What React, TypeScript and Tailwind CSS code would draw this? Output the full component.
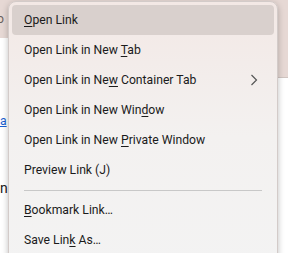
type Item = { pre: string; key: string; post: string; sub?: boolean; active?: boolean };

const items: Item[] = [
  { pre: "", key: "O", post: "pen Link", active: true },
  { pre: "Open Link in New ", key: "T", post: "ab" },
  { pre: "Open Link in Ne", key: "w", post: " Container Tab", sub: true },
  { pre: "Open Link in New Win", key: "d", post: "ow" },
  { pre: "Open Link in New ", key: "P", post: "rivate Window" },
  { pre: "Preview Link (J)", key: "", post: "" },
];

const items2: Item[] = [
  { pre: "", key: "B", post: "ookmark Link…" },
  { pre: "Save Lin", key: "k", post: " As…" },
];

function Row({ item }: { item: Item }) {
  return (
    <div
      className={
        "flex h-[30px] items-center justify-between rounded-[4px] pl-3 pr-[16px] " +
        (item.active ? "bg-[#d9d0cd]" : "")
      }
    >
      <span className="pt-px">
        {item.pre}
        {item.key && <span className="underline underline-offset-2">{item.key}</span>}
        {item.post}
      </span>
      {item.sub && (
        <svg width="8" height="12" viewBox="0 0 8 12" fill="none" className="text-[#555]">
          <polyline points="1.5,1 6.5,6 1.5,11" stroke="currentColor" strokeWidth="1.2" />
        </svg>
      )}
    </div>
  );
}

export default function App() {
  return (
    <div
      className="relative h-[253px] w-[288px] overflow-hidden bg-white text-[12.2px] text-[#1b1b1b]"
      style={{ fontFamily: '"Segoe UI", Roboto, sans-serif' }}
    >
      {/* page behind the menu */}
      <div className="flex h-[38px] items-center bg-[#e6d8d4] text-[#6a5f5c]">
        <span className="-ml-[3px]">o</span>
      </div>
      <div className="flex h-[40px]">
        <div className="flex-1" />
        <div className="flex w-[18px] items-end border-b border-[#cfc4c0] bg-[#e6d8d4] pb-[6px] pl-[1px]">
          y
        </div>
      </div>
      <div className="mt-[34px] text-[#1a5fd0] underline">a</div>
      <div className="mt-[48px] text-[14px]">n</div>

      {/* context menu */}
      <div className="absolute left-[8px] top-[1px] h-[270px] w-[270px] rounded-[8px] border border-[#d3cbc9] bg-gradient-to-b from-[#f3e8e5] via-[#f3f1f0] to-[#f3f3f3] px-[3px] pt-[3px] shadow-[0_2px_6px_rgba(0,0,0,0.25)]">
        {items.map((it) => (
          <Row key={it.pre + it.key} item={it} />
        ))}
        <div className="flex h-[10px] items-center px-3">
          <div className="h-px w-full bg-[#c8c8c8]" />
        </div>
        {items2.map((it) => (
          <Row key={it.pre + it.key} item={it} />
        ))}
      </div>
    </div>
  );
}
